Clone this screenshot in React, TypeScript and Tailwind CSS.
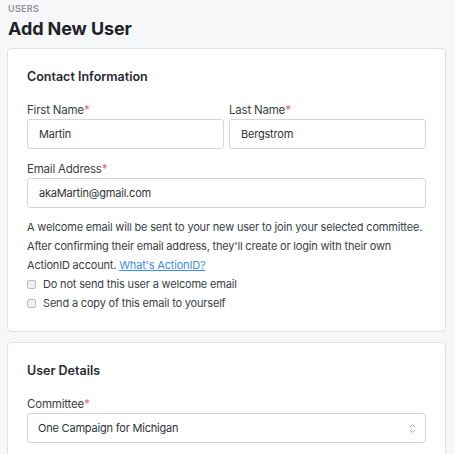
import React from "react";

function Label({ children }: { children: React.ReactNode }) {
  return (
    <div className="text-[11.5px] leading-[18px] tracking-[-0.2px] text-[#3a3e45]">
      {children}
      <span className="text-[#f0626c]">*</span>
    </div>
  );
}

function Input({ value }: { value: string }) {
  return (
    <div className="h-[30px] flex items-center rounded-[3px] border border-[#d3d7dd] bg-white pl-[11px] text-[11px] tracking-[-0.2px] text-[#2f3338]">
      {value}
    </div>
  );
}

function Check({ children }: { children: React.ReactNode }) {
  return (
    <div className="flex items-center h-[19px]">
      <span className="w-[9px] h-[9px] rounded-[2px] border border-[#b9bdc3] bg-[#eef0f2] mr-[7px]" />
      <span>{children}</span>
    </div>
  );
}

export default function App() {
  return (
    <div
      className="w-[454px] h-[454px] overflow-hidden bg-[#f6f7f9] pl-[7px] pr-[8px]"
      style={{ fontFamily: "Inter, 'Noto Sans', sans-serif" }}
    >
      <div className="pl-[1px] pt-[3px] text-[9px] leading-[11px] font-semibold tracking-[0.3px] text-[#8d9299]">
        USERS
      </div>
      <div className="pl-[1px] text-[18px] leading-[29px] font-bold text-[#1f2329] tracking-[-0.1px]">
        Add New User
      </div>
      <div className="mt-[5px] rounded-[4px] border border-[#dde0e5] bg-white px-[19px] pt-[18px] pb-[18px]">
        <div className="text-[12.5px] leading-[20px] font-semibold text-[#26292e]">
          Contact Information
        </div>
        <div className="mt-[14px] flex gap-[5px]">
          <div className="flex-1">
            <Label>First Name</Label>
            <Input value="Martin" />
          </div>
          <div className="flex-1">
            <Label>Last Name</Label>
            <Input value="Bergstrom" />
          </div>
        </div>
        <div className="mt-[11px]">
          <Label>Email Address</Label>
          <Input value="akaMartin@gmail.com" />
        </div>
        <div className="mt-[10px] text-[11px] leading-[19px] tracking-[-0.18px] text-[#3a3e45]">
          <p className="whitespace-nowrap">
            A welcome email will be sent to your new user to join your selected committee.
            <br />
            After confirming their email address, they'll create or login with their own
            <br />
            ActionID account.{" "}
            <a className="text-[#3a8ee6] underline" href="#">
              What's ActionID?
            </a>
          </p>
          <Check>Do not send this user a welcome email</Check>
          <Check>Send a copy of this email to yourself</Check>
        </div>
      </div>
      <div className="mt-[10px] rounded-[4px] border border-[#dde0e5] bg-white px-[19px] pt-[18px] pb-[18px]">
        <div className="text-[12.5px] leading-[20px] font-semibold text-[#26292e]">
          User Details
        </div>
        <div className="mt-[14px]">
          <Label>Committee</Label>
          <div className="h-[30px] flex items-center justify-between rounded-[3px] border border-[#d3d7dd] bg-white pl-[10px] pr-[9px] text-[11px] tracking-[-0.2px] text-[#2f3338]">
            <span>One Campaign for Michigan</span>
            <svg width="7" height="11" viewBox="0 0 7 11" fill="none" stroke="#a4a9b0" strokeWidth="1">
              <path d="M1 4 L3.5 1.5 L6 4" />
              <path d="M1 7 L3.5 9.5 L6 7" />
            </svg>
          </div>
        </div>
      </div>
    </div>
  );
}
